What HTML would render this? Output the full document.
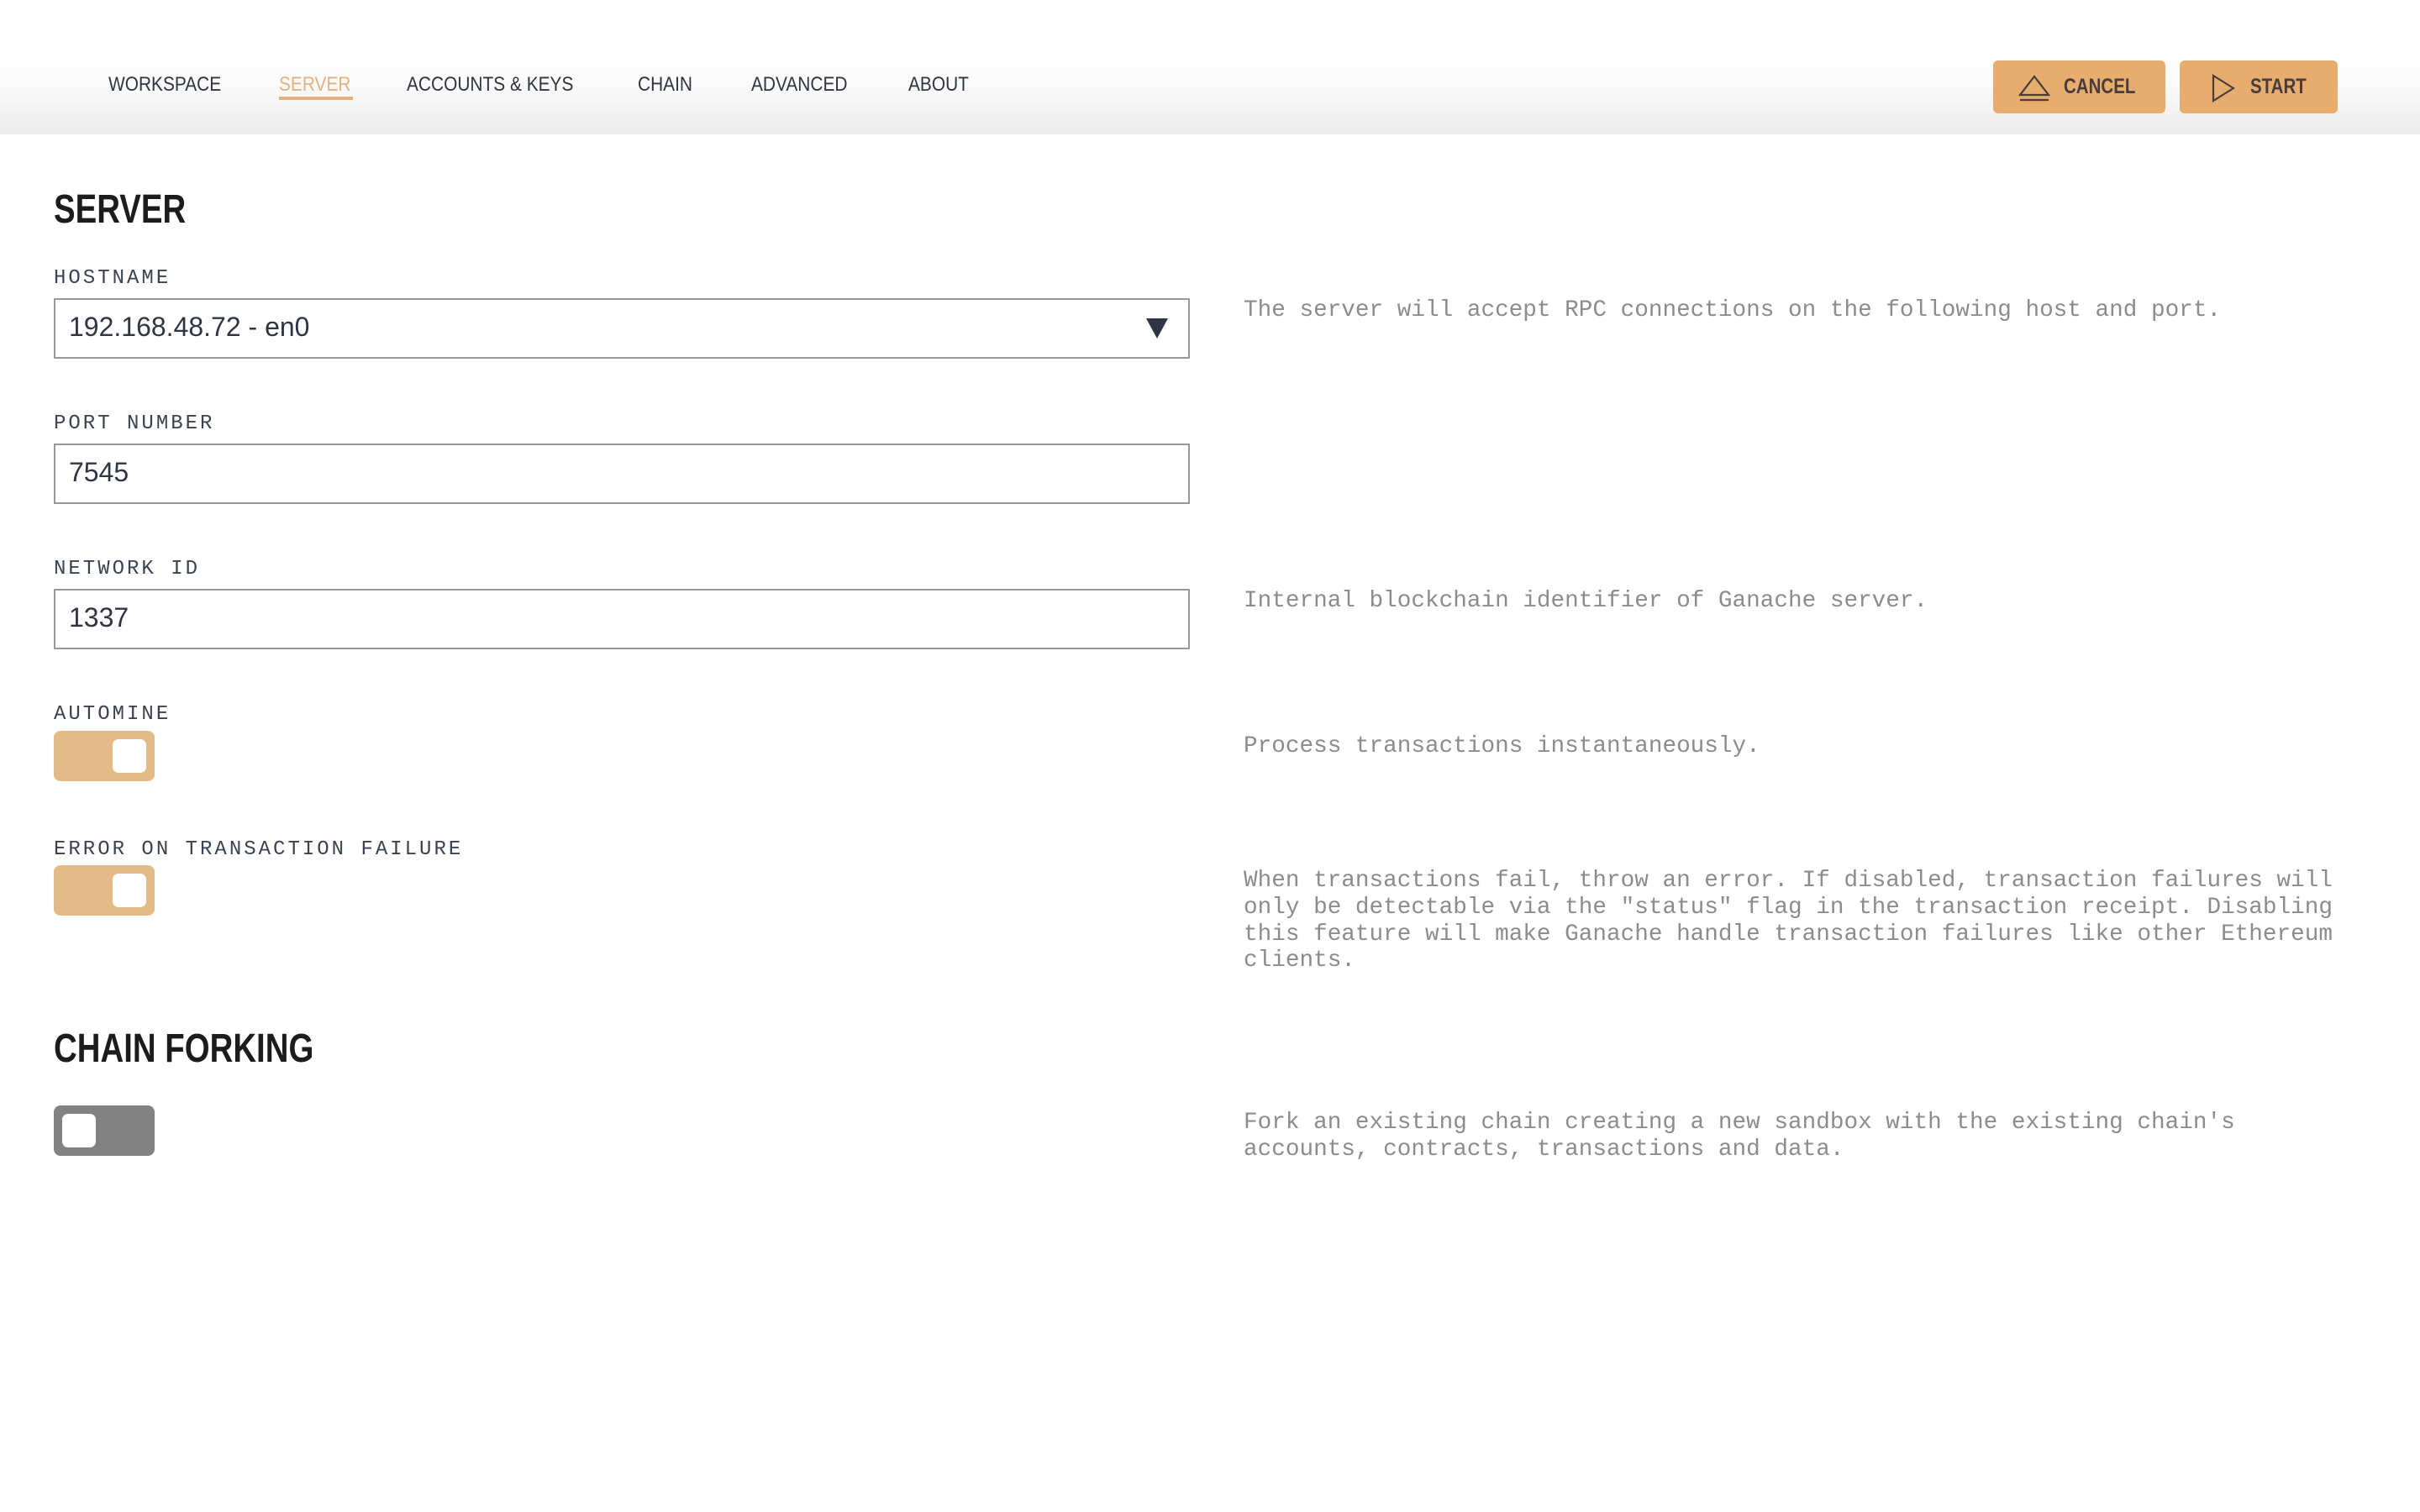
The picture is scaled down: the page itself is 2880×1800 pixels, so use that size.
<!DOCTYPE html>
<html><head><meta charset="utf-8"><style>
*{margin:0;padding:0;box-sizing:border-box}
body{width:2880px;height:1800px;background:#fff;position:relative;overflow:hidden;font-family:"Liberation Sans",sans-serif}
.hdr{position:absolute;left:0;top:0;width:2880px;height:160px;background:linear-gradient(#fff 0%,#fff 45%,#f6f6f6 75%,#ebebeb 100%)}
.nav{position:absolute;top:86px;font-size:24px;color:#2f3542;line-height:30px;white-space:nowrap;transform:scaleX(.87);transform-origin:left}
.act{color:#e3b27e}
.ul{position:absolute;left:332px;top:115px;width:88px;height:4px;background:#e3b27e}
.btn{position:absolute;top:72px;height:63px;background:#e6ad6f;border-radius:6px;color:#4a3b3d;font-weight:bold;font-size:25px}
.btn span{position:absolute;top:17px;display:inline-block;transform:scaleX(.82);transform-origin:left}
.btn svg{position:absolute}
.h{position:absolute;left:64px;font-weight:bold;font-size:48px;color:#1c1c1c;transform:scaleX(.8);transform-origin:left;white-space:nowrap;line-height:56px}
.lbl{position:absolute;left:64px;font-family:"Liberation Mono",monospace;font-size:24px;letter-spacing:3px;color:#3a4352;line-height:28px}
.inp{position:absolute;left:64px;width:1352px;height:72px;border:2px solid #999;background:#fff}
.inp span{position:absolute;left:16px;top:14px;font-size:32px;color:#2f3542}
.tg{position:absolute;left:64px;width:120px;height:60px;border-radius:8px;background:#e4b988}
.tg i{position:absolute;top:10px;width:40px;height:40px;border-radius:7px;background:#fff}
.d{position:absolute;left:1480px;font-family:"Liberation Mono",monospace;font-size:27.7px;color:#8c8c8c;line-height:31.8px;white-space:nowrap}
</style></head><body>
<div class="hdr"></div>
<div class="nav" style="left:129px">WORKSPACE</div>
<div class="nav act" style="left:332px">SERVER</div>
<div class="nav" style="left:484px">ACCOUNTS &amp; KEYS</div>
<div class="nav" style="left:759px">CHAIN</div>
<div class="nav" style="left:894px">ADVANCED</div>
<div class="nav" style="left:1081px">ABOUT</div>
<div class="ul"></div>
<div class="btn" style="left:2372px;width:205px">
<svg style="left:30px;top:17px" width="38" height="32" viewBox="0 0 38 32"><path d="M2 24 L19 2 L36 24 Z" fill="none" stroke="#4a3b3d" stroke-width="2.2"/><path d="M2 30 H36" stroke="#4a3b3d" stroke-width="2.2"/></svg>
<span style="left:84px">CANCEL</span></div>
<div class="btn" style="left:2594px;width:188px">
<svg style="left:38px;top:16px" width="28" height="34" viewBox="0 0 28 34"><path d="M2 2 L26 17 L2 32 Z" fill="none" stroke="#4a3b3d" stroke-width="2.2"/></svg>
<span style="left:84px">START</span></div>

<div class="h" style="top:222px">SERVER</div>
<div class="lbl" style="top:318px">HOSTNAME</div>
<div class="inp" style="top:355px"><span>192.168.48.72 - en0</span>
<svg style="position:absolute;left:1298px;top:20px" width="26" height="28" viewBox="0 0 26 28"><path d="M0 2 H26 L13 26 Z" fill="#2f3542"/></svg></div>
<div class="d" style="top:354px">The server will accept RPC connections on the following host and port.</div>

<div class="lbl" style="top:491px">PORT NUMBER</div>
<div class="inp" style="top:528px"><span>7545</span></div>

<div class="lbl" style="top:664px">NETWORK ID</div>
<div class="inp" style="top:701px"><span>1337</span></div>
<div class="d" style="top:700px">Internal blockchain identifier of Ganache server.</div>

<div class="lbl" style="top:837px">AUTOMINE</div>
<div class="tg" style="top:870px"><i style="left:70px"></i></div>
<div class="d" style="top:873px">Process transactions instantaneously.</div>

<div class="lbl" style="top:998px">ERROR ON TRANSACTION FAILURE</div>
<div class="tg" style="top:1030px"><i style="left:70px"></i></div>
<div class="d" style="top:1033px">When transactions fail, throw an error. If disabled, transaction failures will<br>only be detectable via the "status" flag in the transaction receipt. Disabling<br>this feature will make Ganache handle transaction failures like other Ethereum<br>clients.</div>

<div class="h" style="top:1221px">CHAIN FORKING</div>
<div class="tg" style="top:1316px;background:#828282"><i style="left:10px"></i></div>
<div class="d" style="top:1321px">Fork an existing chain creating a new sandbox with the existing chain's<br>accounts, contracts, transactions and data.</div>
</body></html>
